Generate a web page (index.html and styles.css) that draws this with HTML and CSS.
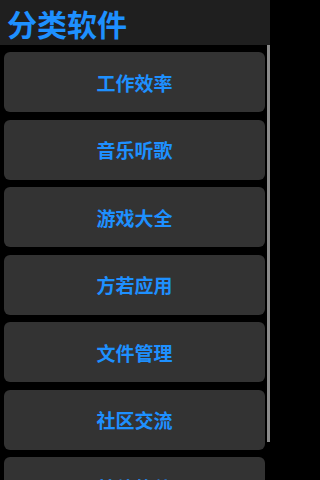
FILE: index.html
```html
<!DOCTYPE html>
<html lang="zh">
<head>
<meta charset="utf-8">
<link rel="stylesheet" href="styles.css">
</head>
<body>
<div class="app">
  <header class="topbar"><h1 class="title">分类软件</h1></header>
  <div class="viewport">
    <main class="list">
      <div class="card">工作效率</div>
      <div class="card">音乐听歌</div>
      <div class="card">游戏大全</div>
      <div class="card">方若应用</div>
      <div class="card">文件管理</div>
      <div class="card">社区交流</div>
      <div class="card">其他软件</div>
    </main>
    <div class="scroll-thumb"></div>
  </div>
</div>
</body>
</html>
```
FILE: styles.css
```css
html, body {
  margin: 0;
  padding: 0;
  background: #000;
  overflow: hidden;
  font-family: "Noto Sans CJK SC", "Noto Sans", sans-serif;
}
.app {
  width: 270px;
  height: 480px;
  overflow: hidden;
}
.topbar {
  height: 45px;
  background: #1f1f1f;
  display: flex;
  align-items: center;
  padding-left: 7px;
}
.title {
  margin: 0;
  font-size: 30px;
  font-weight: 700;
  color: #1e90ff;
  line-height: 1;
}
.viewport {
  position: relative;
  height: 435px;
}
.list {
  height: 100%;
  overflow-y: scroll;
  scrollbar-width: none;
  padding: 7px 5px 6px 4px;
  box-sizing: border-box;
  display: flex;
  flex-direction: column;
  gap: 7.5px;
}
.list::-webkit-scrollbar { display: none; }
.scroll-thumb {
  position: absolute;
  top: 0;
  right: 0;
  width: 3px;
  height: 397px;
  background: #8a8a8a;
}
.card {
  flex: 0 0 60px;
  background: #333333;
  border-radius: 6px;
  display: flex;
  align-items: center;
  justify-content: center;
  color: #1e90ff;
  font-size: 19px;
  font-weight: 700;
}
```
